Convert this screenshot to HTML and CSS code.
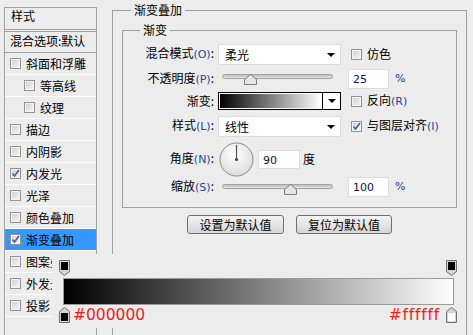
FILE: index.html
```html
<!DOCTYPE html>
<html lang="zh-CN">
<head>
    <meta charset="UTF-8">
    <title>渐变叠加</title>
    <link rel="stylesheet" href="styles.css">
</head>
<body>

<div class="dialog">
    <div class="styles-list">
        <div class="list-title">样式</div>
        <div class="list-blend">混合选项:默认</div>
        <ul class="fx-list">
            <li><span class="cb"></span>斜面和浮雕</li>
            <li class="sub"><span class="cb"></span>等高线</li>
            <li class="sub"><span class="cb"></span>纹理</li>
            <li><span class="cb"></span>描边</li>
            <li><span class="cb"></span>内阴影</li>
            <li><span class="cb checked"><svg width="9" height="9" viewBox="0 0 9 9"><path d="M1.5 4.5 L3.5 7 L8 1" fill="none" stroke="#3d5fa6" stroke-width="1.6"/></svg></span>内发光</li>
            <li><span class="cb"></span>光泽</li>
            <li><span class="cb"></span>颜色叠加</li>
            <li class="active"><span class="cb checked"><svg width="9" height="9" viewBox="0 0 9 9"><path d="M1.5 4.5 L3.5 7 L8 1" fill="none" stroke="#3d5fa6" stroke-width="1.6"/></svg></span>渐变叠加</li>
            <li><span class="cb"></span>图案叠加</li>
            <li><span class="cb"></span>外发光</li>
            <li><span class="cb"></span>投影</li>
        </ul>
    </div>

    <fieldset class="group outer">
        <legend>渐变叠加</legend>
        <fieldset class="group inner">
            <legend>渐变</legend>

            <div class="row r1">
                <label class="lbl">混合模式<span class="key">(O)</span>:</label>
                <div class="select">柔光<span class="arrow"></span></div>
                <span class="cb opt-cb"></span><span class="opt">仿色</span>
            </div>

            <div class="row r2">
                <label class="lbl">不透明度<span class="key">(P)</span>:</label>
                <div class="slider">
                    <div class="track"></div>
                    <svg class="thumb" style="left: 22px" width="13" height="11" viewBox="0 0 13 11"><path d="M0.5 10.5 V5.5 L6.5 0.5 L12.5 5.5 V10.5 Z" fill="#e6e6e6" stroke="#7d7d7d"/></svg>
                </div>
                <div class="num">25</div>
                <span class="pct">%</span>
            </div>

            <div class="row r3">
                <label class="lbl">渐变:</label>
                <div class="grad-pick">
                    <div class="grad-fill"></div>
                    <div class="grad-drop"><span class="arrow"></span></div>
                </div>
                <span class="cb opt-cb"></span><span class="opt">反向<span class="key">(R)</span></span>
            </div>

            <div class="row r4">
                <label class="lbl">样式<span class="key">(L)</span>:</label>
                <div class="select">线性<span class="arrow"></span></div>
                <span class="cb opt-cb checked"><svg width="9" height="9" viewBox="0 0 9 9"><path d="M1.5 4.5 L3.5 7 L8 1" fill="none" stroke="#3d5fa6" stroke-width="1.6"/></svg></span><span class="opt">与图层对齐<span class="key">(I)</span></span>
            </div>

            <div class="row r5">
                <label class="lbl">角度<span class="key">(N)</span>:</label>
                <svg class="dial" width="35" height="35" viewBox="0 0 35 35">
                    <defs>
                        <radialGradient id="dialFill" cx="0.45" cy="0.35" r="0.7">
                            <stop offset="0" stop-color="#ffffff"/>
                            <stop offset="1" stop-color="#d9d9d9"/>
                        </radialGradient>
                    </defs>
                    <circle cx="17.5" cy="17.5" r="16.5" fill="url(#dialFill)" stroke="#8c8c8c"/>
                    <line x1="17.5" y1="17.5" x2="17.5" y2="3" stroke="#555" stroke-width="1.2"/>
                    <circle cx="17.5" cy="17.5" r="1.6" fill="#444"/>
                </svg>
                <div class="num angle">90</div>
                <span class="unit">度</span>
            </div>

            <div class="row r6">
                <label class="lbl">缩放<span class="key">(S)</span>:</label>
                <div class="slider">
                    <div class="track"></div>
                    <svg class="thumb" style="left: 62px" width="13" height="11" viewBox="0 0 13 11"><path d="M0.5 10.5 V5.5 L6.5 0.5 L12.5 5.5 V10.5 Z" fill="#e6e6e6" stroke="#7d7d7d"/></svg>
                </div>
                <div class="num">100</div>
                <span class="pct">%</span>
            </div>
        </fieldset>

        <div class="btns">
            <button class="btn wide">设置为默认值</button>
            <button class="btn">复位为默认值</button>
        </div>
    </fieldset>
</div>

<!-- gradient editor strip laid over the dialog -->
<div class="grad-editor">
    <div class="stops">
        <svg width="11" height="16" viewBox="0 0 11 16"><path d="M0.5 0.5 H10.5 V11.5 L5.5 15.5 L0.5 11.5 Z" fill="#d4d4d4" stroke="#6e6e6e"/><rect x="2" y="2" width="7" height="8" fill="#000"/></svg>
        <svg width="11" height="16" viewBox="0 0 11 16"><path d="M0.5 0.5 H10.5 V11.5 L5.5 15.5 L0.5 11.5 Z" fill="#d4d4d4" stroke="#6e6e6e"/><rect x="2" y="2" width="7" height="8" fill="#000"/></svg>
    </div>
    <div class="bar"></div>
    <div class="stops bottom">
        <svg width="11" height="16" viewBox="0 0 11 16"><path d="M0.5 15.5 H10.5 V4.5 L5.5 0.5 L0.5 4.5 Z" fill="#d4d4d4" stroke="#6e6e6e"/><rect x="2" y="6" width="7" height="8" fill="#000"/></svg>
        <span class="hex">#000000</span>
        <span class="hex right">#ffffff</span>
        <svg width="11" height="16" viewBox="0 0 11 16"><path d="M0.5 15.5 H10.5 V4.5 L5.5 0.5 L0.5 4.5 Z" fill="#d4d4d4" stroke="#6e6e6e"/><rect x="2" y="6" width="7" height="8" fill="#fff"/></svg>
    </div>
</div>

</body>
</html>
```

FILE: styles.css
```css
body {
    margin: 0;
    width: 473px;
    height: 335px;
    overflow: hidden;
    position: relative;
    background: #ececec;
    font-family: "Noto Sans CJK SC", sans-serif;
    font-size: 12px;
    line-height: 16px;
    color: #000;
}
.dialog {
    display: flex;
    align-items: flex-start;
}

/* left list of layer styles */
.styles-list {
    box-sizing: border-box;
    width: 93px;
    height: 328px;
    margin: 7px 0 0 4px;
    border: 1px solid #a0a0a0;
    border-bottom: none;
}
.list-title {
    height: 21px;
    padding-left: 6px;
    border-bottom: 3px double #a0a0a0;
}
.list-blend {
    height: 20px;
    line-height: 18px;
    padding-left: 5px;
    border-bottom: 1px solid #a0a0a0;
}
.fx-list {
    list-style: none;
    margin: 0;
    padding: 0;
}
.fx-list li {
    display: flex;
    align-items: center;
    height: 21px;
    padding-left: 5px;
    border-bottom: 1px solid #fff;
    white-space: nowrap;
}
.fx-list li.sub { padding-left: 19px; }
.fx-list li.active { background: #3399ff; }
.fx-list .cb { margin-right: 5px; }

.cb {
    box-sizing: border-box;
    flex: none;
    width: 11px;
    height: 11px;
    border: 1px solid #939393;
    background: linear-gradient(135deg, #d0d0d0, #f6f6f6);
    box-shadow: inset 0 0 0 1px #f4f4f4;
    display: inline-flex;
    align-items: center;
    justify-content: center;
}
.cb svg { display: block; }

/* right side groups */
.group {
    box-sizing: border-box;
    min-width: 0;
    border: 1px solid #a0a0a0;
    margin: 0;
}
.group legend {
    line-height: 16px;
    padding: 0 3px;
}
.outer {
    width: 355px;
    height: 333px;
    margin: 2px 0 0 15px;
    padding: 4px 9px 0 9px;
    border-bottom: none;
}
.outer > legend { margin-left: 9px; }
.inner {
    width: 335px;
    padding: 5px 0 9px 0;
}
.inner > legend { margin-left: 17px; }

.row {
    display: flex;
    align-items: center;
}
.r1 { height: 22px; }
.r2 { height: 27px; }
.r3 { height: 18px; }
.r4 { height: 32px; }
.r5 { height: 34px; }
.r6 { height: 22px; }

.lbl {
    width: 91px;
    text-align: right;
    white-space: nowrap;
}
.key {
    font-family: "DejaVu Sans", sans-serif;
    font-size: 11px;
    color: #1d4796;
}

.select {
    box-sizing: border-box;
    position: relative;
    width: 123px;
    height: 21px;
    margin-left: 4px;
    padding-left: 6px;
    line-height: 19px;
    background: #fff;
    border: 1px solid #dcdcdc;
}
.arrow {
    position: absolute;
    top: 8px;
    right: 5px;
    width: 0;
    height: 0;
    border-left: 4px solid transparent;
    border-right: 4px solid transparent;
    border-top: 4px solid #000;
}
.opt-cb { margin-left: 10px; margin-right: 5px; }
.opt { white-space: nowrap; }

.slider {
    position: relative;
    width: 111px;
    height: 12px;
    margin-left: 8px;
    margin-right: 15px;
}
.track {
    box-sizing: border-box;
    height: 5px;
    margin-top: 1px;
    border: 1px solid #a3a3a3;
    border-radius: 3px;
    background: linear-gradient(#bdbdbd, #e4e4e4);
}
.thumb {
    position: absolute;
    top: 1px;
}
.r6 .slider { margin-top: 3px; }
.num {
    box-sizing: border-box;
    width: 41px;
    height: 20px;
    padding-left: 4px;
    line-height: 19px;
    background: #fff;
    border: 1px solid #dcdcdc;
    font-family: "DejaVu Sans", sans-serif;
    font-size: 11px;
    color: #10104a;
}
.pct {
    margin-left: 6px;
    font-family: "DejaVu Sans", sans-serif;
    font-size: 11px;
    color: #1d3f86;
}
.dial {
    margin-left: 5px;
    margin-right: 4px;
    flex: none;
}
.angle {
    width: 42px;
    height: 19px;
}
.unit { margin-left: 3px; }

.grad-pick {
    box-sizing: border-box;
    display: flex;
    width: 123px;
    height: 18px;
    margin-left: 4px;
    border: 1px solid #000;
    background: #fff;
}
.grad-fill {
    flex: 1;
    margin: 1px;
    background: linear-gradient(to right, #000, #fff);
}
.grad-drop {
    position: relative;
    width: 17px;
    border-left: 1px solid #000;
}
.grad-drop .arrow { top: 6px; right: 4px; }

.btns {
    display: flex;
    justify-content: center;
    gap: 12px;
    margin-top: 7px;
}
.btn {
    box-sizing: border-box;
    width: 96px;
    height: 19px;
    padding: 0;
    font: inherit;
    line-height: 16px;
    color: #000;
    border: 1px solid #6f6f6f;
    border-radius: 3px;
    background: linear-gradient(#f4f4f4, #d6d6d6);
}
.btn.wide { width: 97px; }

/* gradient editor strip */
.grad-editor {
    position: absolute;
    left: 52px;
    top: 254px;
    width: 411px;
    height: 74px;
    padding: 6px 0 0 7px;
    box-sizing: border-box;
    background: #ececec;
}
.stops {
    display: flex;
    justify-content: space-between;
    align-items: center;
    width: 398px;
    height: 16px;
}
.stops svg { display: block; }
.bar {
    box-sizing: border-box;
    width: 391px;
    height: 27px;
    margin: 2px 0 2px 4px;
    border: 1px solid #9a9a9a;
    background: linear-gradient(to right, #000, #fff);
}
.hex {
    font-family: "DejaVu Sans", sans-serif;
    font-size: 15.5px;
    line-height: 16px;
    color: #f01c1c;
    margin-left: 3px;
}
.hex.right {
    margin-left: auto;
    margin-right: 6px;
    letter-spacing: 0.8px;
}
```
